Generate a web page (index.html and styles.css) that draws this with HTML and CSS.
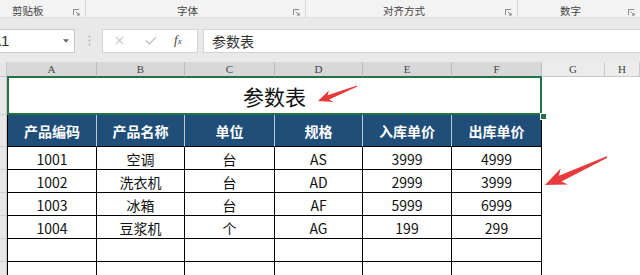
FILE: index.html
```html
<!DOCTYPE html>
<html lang="zh-CN">
<head>
<meta charset="utf-8">
<title>参数表</title>
<link rel="stylesheet" href="styles.css">
</head>
<body>
<div class="app">
  <div class="ribbon">
    <div class="grp g1"><span class="lbl">剪贴板</span><svg class="launch" viewBox="0 0 8 8"><path d="M0.5 7V0.5H7" fill="none" stroke="#777" stroke-width="1"/><path d="M3 3L7 7M7 4.5V7H4.5" fill="none" stroke="#777" stroke-width="1"/></svg></div>
    <div class="grp g2"><span class="lbl">字体</span><svg class="launch" viewBox="0 0 8 8"><path d="M0.5 7V0.5H7" fill="none" stroke="#777" stroke-width="1"/><path d="M3 3L7 7M7 4.5V7H4.5" fill="none" stroke="#777" stroke-width="1"/></svg></div>
    <div class="grp g3"><span class="lbl">对齐方式</span><svg class="launch" viewBox="0 0 8 8"><path d="M0.5 7V0.5H7" fill="none" stroke="#777" stroke-width="1"/><path d="M3 3L7 7M7 4.5V7H4.5" fill="none" stroke="#777" stroke-width="1"/></svg></div>
    <div class="grp g4"><span class="lbl">数字</span><svg class="launch" viewBox="0 0 8 8"><path d="M0.5 7V0.5H7" fill="none" stroke="#777" stroke-width="1"/><path d="M3 3L7 7M7 4.5V7H4.5" fill="none" stroke="#777" stroke-width="1"/></svg></div>
  </div>

  <div class="fbar">
    <div class="namebox"><span class="nb-text">A1</span><svg class="dd" viewBox="0 0 7 4"><path d="M0 0H7L3.5 4Z" fill="#666"/></svg></div>
    <svg class="dots" viewBox="0 0 3 11"><circle cx="1.5" cy="1.5" r="1" fill="#b5b5b5"/><circle cx="1.5" cy="5.5" r="1" fill="#b5b5b5"/><circle cx="1.5" cy="9.5" r="1" fill="#b5b5b5"/></svg>
    <div class="fbtns">
      <svg class="bx" viewBox="0 0 10 10"><path d="M1 1L9 9M9 1L1 9" stroke="#c4c4c4" stroke-width="1.3" fill="none"/></svg>
      <svg class="bok" viewBox="0 0 12 9"><path d="M1 4.5L4.5 8L11 1" stroke="#c4c4c4" stroke-width="1.4" fill="none"/></svg>
      <span class="fx">f<span class="sub">x</span></span>
    </div>
    <div class="finput">参数表</div>
  </div>

  <div class="sheet">
    <div class="corner"></div>
    <div class="ch sel">A</div><div class="ch sel">B</div><div class="ch sel">C</div><div class="ch sel">D</div><div class="ch sel">E</div><div class="ch sel">F</div><div class="ch">G</div><div class="ch">H</div>

    <div class="rh"></div>
    <div class="title">参数表</div>
    <div class="blank"></div><div class="blank"></div>

    <div class="rh"></div>
    <div class="h a">产品编码</div><div class="h">产品名称</div><div class="h">单位</div><div class="h">规格</div><div class="h">入库单价</div><div class="h last">出库单价</div>
    <div class="blank"></div><div class="blank"></div>

    <div class="rh"></div>
    <div class="c a">1001</div><div class="c">空调</div><div class="c">台</div><div class="c">AS</div><div class="c">3999</div><div class="c">4999</div>
    <div class="blank"></div><div class="blank"></div>

    <div class="rh"></div>
    <div class="c a">1002</div><div class="c">洗衣机</div><div class="c">台</div><div class="c">AD</div><div class="c">2999</div><div class="c">3999</div>
    <div class="blank"></div><div class="blank"></div>

    <div class="rh"></div>
    <div class="c a">1003</div><div class="c">冰箱</div><div class="c">台</div><div class="c">AF</div><div class="c">5999</div><div class="c">6999</div>
    <div class="blank"></div><div class="blank"></div>

    <div class="rh"></div>
    <div class="c a">1004</div><div class="c">豆浆机</div><div class="c">个</div><div class="c">AG</div><div class="c">199</div><div class="c">299</div>
    <div class="blank"></div><div class="blank"></div>

    <div class="rh"></div>
    <div class="c a"></div><div class="c"></div><div class="c"></div><div class="c"></div><div class="c"></div><div class="c"></div>
    <div class="blank"></div><div class="blank"></div>

    <div class="rh"></div>
    <div class="c a"></div><div class="c"></div><div class="c"></div><div class="c"></div><div class="c"></div><div class="c"></div>
    <div class="blank"></div><div class="blank"></div>

    <div class="handle"></div>
  </div>

  <svg class="arrows" viewBox="0 0 640 275">
    <polygon transform="translate(318 101) rotate(-21)" points="0,0 14,-6 11,-2 42,-0.6 42,0.6 11,2.5 14,6.5" fill="#e83a3a"/>
    <polygon transform="translate(545 185) rotate(-24.3)" points="0,0 21,-8.5 16.5,-2.8 68,-0.8 68,0.8 16.5,3.5 21,9" fill="#e83a3a"/>
  </svg>
</div>
</body>
</html>
```

FILE: styles.css
```css
html, body {
  margin: 0;
  padding: 0;
  background: #fff;
}

.app {
  position: relative;
  width: 640px;
  height: 275px;
  overflow: hidden;
  font-family: "Noto Sans CJK SC", "Noto Sans", sans-serif;
}

/* Ribbon group labels */
.ribbon {
  display: flex;
  height: 18px;
  background: #f3f3f3;
  border-bottom: 1px solid #e0e0e0;
  box-sizing: border-box;
}

.grp {
  display: flex;
  align-items: center;
  height: 17px;
  padding-top: 5px;
  border-right: 1px solid #d6d6d6;
  box-sizing: border-box;
  flex: none;
}

.g1 { width: 86px; }
.g2 { width: 220px; }
.g3 { width: 212px; }
.g4 { flex: 1; border-right: none; }

.lbl {
  font-size: 10.5px;
  line-height: 12px;
  color: #444;
  white-space: nowrap;
}

.g1 .lbl { margin-left: 12px; }
.g2 .lbl { margin-left: 91px; }
.g3 .lbl { margin-left: 77px; }
.g4 .lbl { margin-left: 42px; }

.launch {
  width: 7px;
  height: 7px;
  margin-left: auto;
  margin-right: 5px;
  margin-top: 3px;
}

/* Formula bar */
.fbar {
  display: flex;
  align-items: center;
  height: 44px;
  background: #e9e9e9;
  padding: 10px 0 9px 0;
  box-sizing: border-box;
}

.namebox {
  position: relative;
  width: 76px;
  height: 24px;
  margin-left: -1px;
  background: #fff;
  border: 1px solid #c9c9c9;
  box-sizing: border-box;
  display: flex;
  align-items: center;
  overflow: hidden;
}

.nb-text {
  margin-left: -9px;
  font-family: "Liberation Sans", sans-serif;
  font-size: 15px;
  color: #333;
}

.dd {
  width: 6px;
  height: 4px;
  margin-left: auto;
  margin-right: 5px;
}

.dots {
  width: 3px;
  height: 11px;
  margin-left: 13px;
}

.fbtns {
  display: flex;
  align-items: center;
  width: 96px;
  height: 24px;
  margin-left: 11px;
  background: #fff;
  border: 1px solid #d3d3d3;
  box-sizing: border-box;
}

.bx {
  width: 9px;
  height: 9px;
  margin-left: 12px;
}

.bok {
  width: 12px;
  height: 9px;
  margin-left: 21px;
}

.fx {
  margin-left: 17px;
  font-family: "Liberation Serif", serif;
  font-style: italic;
  font-size: 13px;
  color: #444;
  line-height: 14px;
}

.fx .sub {
  font-size: 9px;
}

.finput {
  flex: 1;
  height: 24px;
  margin-left: 5px;
  background: #fff;
  border: 1px solid #d3d3d3;
  border-right: none;
  box-sizing: border-box;
  font-size: 14px;
  line-height: 22px;
  padding-left: 8px;
  color: #333;
}

/* Sheet grid */
.sheet {
  position: relative;
  display: grid;
  grid-template-columns: 7px 90px 88px 90px 88px 89px 90px 63px 1fr;
  grid-template-rows: 15px 38px 32px 23px 23px 23px 23px 23px 23px;
}

.corner {
  background: #e6e6e6;
  border-right: 1px solid #c6c6c6;
  border-bottom: 1px solid #c6c6c6;
  box-sizing: border-box;
}

.ch {
  background: #ececec;
  border-right: 1px solid #c9c9c9;
  border-bottom: 1px solid #c9c9c9;
  box-sizing: border-box;
  font-family: "Liberation Serif", serif;
  font-size: 11px;
  line-height: 14px;
  text-align: center;
  color: #444;
}

.ch.sel {
  background: #d8d8d8;
  border-right-color: #bcbcbc;
  border-bottom: 1px solid #217346;
}

.rh {
  background: #e8e8e8;
  border-right: 1px solid #c6c6c6;
  border-bottom: 1px solid #d0d0d0;
  box-sizing: border-box;
}

.blank {
  background: #fff;
}

.title {
  grid-column: 2 / span 6;
  border: 2px solid #217346;
  border-top-width: 1px;
  box-sizing: border-box;
  display: flex;
  align-items: center;
  justify-content: center;
  font-size: 21px;
  color: #111;
  padding-top: 1px;
}

.h, .c {
  box-sizing: border-box;
  display: flex;
  align-items: center;
  justify-content: center;
  font-size: 14px;
}

.h {
  background: #1f4e79;
  color: #fff;
  font-weight: bold;
  border-right: 1px solid #b9c7d8;
  border-bottom: 1px solid #000;
}

.h.a { border-left: 1px solid #000; }
.h.last { border-right: 1px solid #000; }

.c {
  color: #111;
  border-right: 1px solid #000;
  border-bottom: 1px solid #000;
  padding-top: 1px;
}

.c.a { border-left: 1px solid #000; }

.handle {
  position: absolute;
  left: 540px;
  top: 51px;
  width: 5px;
  height: 5px;
  background: #217346;
  border: 1px solid #fff;
}

.arrows {
  position: absolute;
  left: 0;
  top: 0;
  width: 640px;
  height: 275px;
  pointer-events: none;
}
```
